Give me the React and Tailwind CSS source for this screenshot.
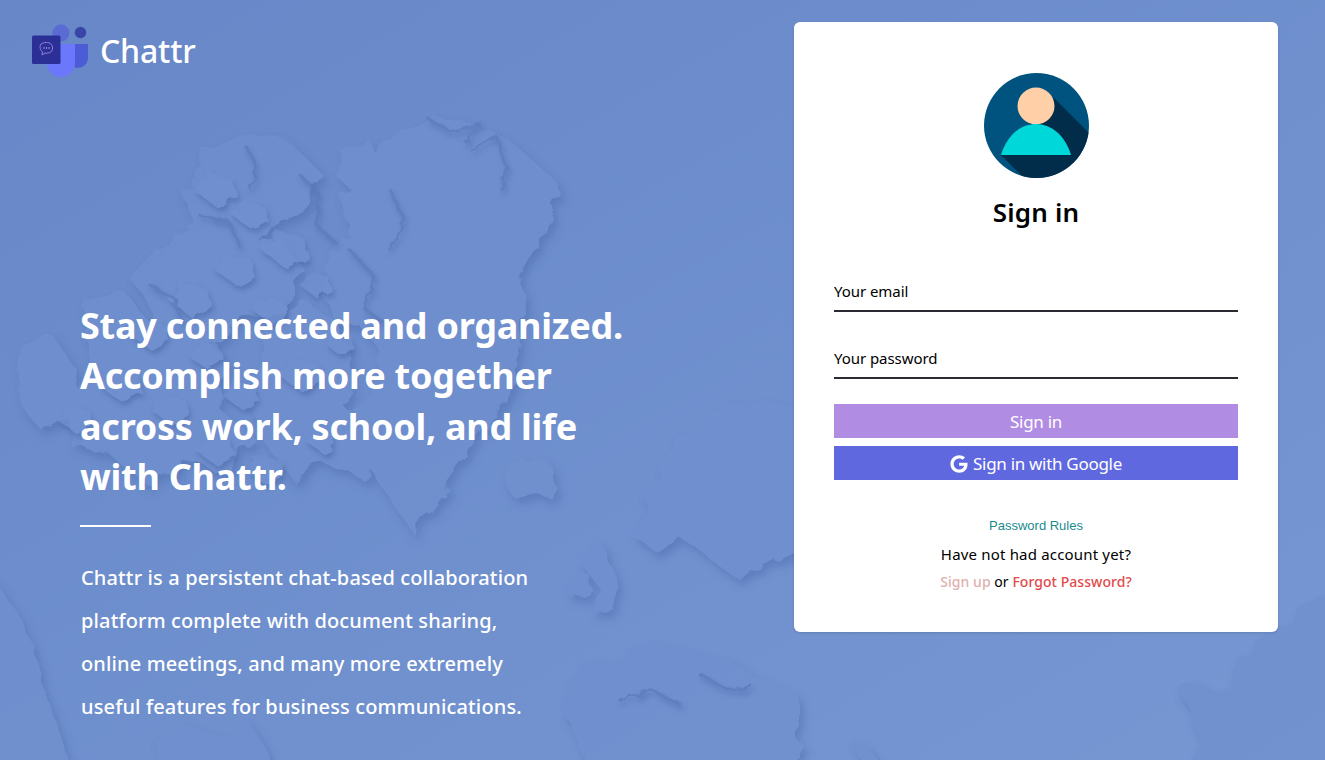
import React from 'react';
import { FaGoogle } from 'react-icons/fa';

// small arctic islands and fjords, these give the map its rough texture
const ISLANDS = [
  [215, 190, 22], [250, 215, 18], [285, 250, 24], [235, 270, 20], [190, 300, 22], [270, 310, 18],
  [315, 285, 16], [150, 335, 20], [205, 355, 18], [120, 385, 22], [170, 410, 20], [240, 395, 18],
  [300, 375, 22], [75, 420, 18], [215, 450, 20], [320, 440, 16], [265, 470, 20], [340, 345, 14],
];
const FJORDS = [
  'M430 120l20 12 28-8-14 16',
  'M472 150l24-14 10 30-4 24',
  'M245 145l14 24-10 18',
  'M300 175l20 20-4 30 18 16',
  'M200 215l30 8 10 24',
  'M350 250l24 26-8 34 20 14',
  'M390 190l14 30-14 30',
  'M150 285l26 14 4 22',
  'M620 700l30-10 30 14',
  'M700 675l30 16 20-6',
];

// Faint relief map behind the page
const WorldMap = () => (
  <svg className="absolute inset-0 w-full h-full" viewBox="0 0 1325 760" aria-hidden="true">
    <defs>
      <filter id="relief" x="-10%" y="-10%" width="120%" height="120%">
        <feTurbulence type="fractalNoise" baseFrequency="0.035" numOctaves="3" seed="7" result="noise" />
        <feDisplacementMap in="SourceGraphic" in2="noise" scale="20" result="coast" />
        <feGaussianBlur in="coast" stdDeviation="0.6" result="soft" />
        <feDropShadow in="soft" dx="4" dy="6" stdDeviation="4" floodColor="#4a68a8" floodOpacity="0.6" />
      </filter>
      <filter id="fine" x="-10%" y="-10%" width="120%" height="120%">
        <feTurbulence type="fractalNoise" baseFrequency="0.08" numOctaves="2" seed="3" result="noise" />
        <feDisplacementMap in="SourceGraphic" in2="noise" scale="10" result="coast" />
        <feDropShadow in="coast" dx="2" dy="4" stdDeviation="2.5" floodColor="#46639f" floodOpacity="0.7" />
      </filter>
    </defs>
    <g filter="url(#relief)" fill="#6f8fce" opacity="0.75">
      {/* arctic islands */}
      <path d="M205 150l40-18 45 10 30 30-15 40-40 12-18 32-42-16-20-44z" />
      <path d="M150 245l50-18 44 16 30-10 30 36-18 44-46 8-30 26-50-18-24-44z" />
      <path d="M85 300l40-8 30 38 40-4 34 38-10 44 34 28-22 36-50-12-32 26-40-32-36-6-8-50 24-24z" />
      <path d="M20 345l34-8 24 34-6 44-30 16-26-30z" />
      <path d="M270 330l34-28 30 16 20 44-10 44 30 36-8 40-44-20-28 20-34-44-6-60z" />
      <path d="M340 150l30-10 10 30-24 24-20-18z" />
      {/* greenland */}
      <path d="M385 140l50-24 70 20 54 48-20 60-20 38 5 64-18 50-43 66-50 72-40-59-20-40-20-10 40-30 10-40-20-26-30-8-14-44 30-40-10-40z" />
      <path d="M515 462c14-8 30-6 36 4 6 12 2 24-10 30-14 6-30 4-34-8-4-10 0-20 8-26z" />
      {/* scandinavia */}
      <path d="M680 440l50-34 70-6v150l-60 30-65-46-20 17-20-12 10-39z" />
      {/* britain */}
      <path d="M588 545l16-2 10 28 12 24-14 14-22 2 8-24-14-20z" />
      <path d="M570 574l18-2-2 20-16 6z" />
      {/* europe */}
      <path d="M574 667l50-12 50-12 56 20 70 34v70H590l-26-50z" />
      {/* america, bottom edge */}
      <path d="M-10 575l30 40 30 90 24 65h-84z" />
      <path d="M150 735l36-8 36 10 30-12 24 45H160z" />
      {/* right side */}
      <path d="M848 738l20 8 18 24h-20z" />
      <path d="M780 704l10-4 2 36 10 34h-22z" />
      <path d="M1300 600l-23 35-35 25-14 30-31-6-19 5 12 22 10 28-20 40h155V600z" />
    </g>
    <g filter="url(#fine)" opacity="0.7">
      {ISLANDS.map(([x, y, r]) => (
        <path
          key={`${x}-${y}`}
          d={`M${x - r} ${y}l${r * 0.7} ${-r * 0.8} ${r * 1.1} ${r * 0.3} ${r * 0.2} ${r * 0.8} ${-r * 0.9} ${r * 0.5}z`}
          fill="#7090cf"
        />
      ))}
      {FJORDS.map((d) => (
        <path key={d} d={d} fill="none" stroke="#5a79bb" strokeWidth="3" strokeLinecap="round" />
      ))}
    </g>
  </svg>
);

const Logo = () => (
  <svg width="57" height="56" viewBox="0 0 57 56">
    <circle cx="48.500" cy="10.500" r="5.700" fill="#3a45a8" />
    <path d="M42 22h14v14a10 10 0 0 1-14 9z" fill="#4c5cd6" />
    <circle cx="29" cy="11" r="8.500" fill="#5a6cd4" />
    <path d="M15 22h28v19a14 14 0 0 1-28 0z" fill="#6b78fb" />
    <rect x="0" y="13.500" width="28.500" height="28.500" rx="1.500" fill="#2b3097" />
    <path d="M9 22c3-2 8-2 10 0 2 2 2 6 0 8-2 1-4 1.500-6 1l-3 2 .5-3c-2-2-3.500-5-1.500-8z" fill="none" stroke="#9b7be0" strokeWidth="1" />
    <circle cx="12" cy="26" r=".7" fill="#c9b8f2" />
    <circle cx="14.500" cy="26" r=".7" fill="#c9b8f2" />
    <circle cx="17" cy="26" r=".7" fill="#c9b8f2" />
  </svg>
);

const Avatar = () => (
  <svg width="105" height="105" viewBox="0 0 105 105">
    <defs>
      <clipPath id="disc"><circle cx="52.500" cy="52.500" r="52.500" /></clipPath>
    </defs>
    <circle cx="52.500" cy="52.500" r="52.500" fill="#00527f" />
    <path d="M70 25L112 67V110H45L17 82z" fill="#012d4a" clipPath="url(#disc)" />
    <circle cx="52" cy="33" r="18.500" fill="#ffd0a8" />
    <path d="M17 82C23 62 37 51 52 51C67 51 81 62 87 82z" fill="#00d7d9" />
  </svg>
);

export default function App() {
  const sans = { fontFamily: '"Noto Sans", "Open Sans", sans-serif' };
  return (
    <div className="relative flex h-screen overflow-hidden bg-gradient-to-br from-[#6787c8] to-[#7697d2]" style={sans}>
      <WorldMap />

      <div className="relative flex-1 flex flex-col text-white">
        <div className="flex items-center gap-[11px] pl-[32px] pt-[20px]">
          <Logo />
          <span className="text-[32px] font-medium leading-[56px] mt-[3px] tracking-[-0.2px]">Chattr</span>
        </div>
        <div className="pl-[80px] pt-[222px]">
          <h1 className="text-[36px] font-bold leading-[50.4px] tracking-[-0.25px]">
            Stay connected and organized.<br />
            Accomplish more together<br />
            across work, school, and life<br />
            with Chattr.
          </h1>
          <div className="w-[71px] h-[2px] bg-white mt-[22px] mb-[29px]" />
          <p className="text-[20px] font-medium leading-[43px] tracking-[0.13px] pl-px">
            Chattr is a persistent chat-based collaboration<br />
            platform complete with document sharing,<br />
            online meetings, and many more extremely<br />
            useful features for business communications.
          </p>
        </div>
      </div>

      <div className="relative w-[484px] h-[610px] mt-[22px] mr-[47px] bg-white rounded-md shadow-sm px-10 pt-[51px]">
        <div className="flex flex-col items-center">
          <Avatar />
          <h2 className="text-[26px] font-semibold leading-[36px] mt-[16px] text-black tracking-[0.17px]">Sign in</h2>
        </div>
        <input
          placeholder="Your email"
          className="block w-full h-[40px] mt-[42px] border-b-2 border-[#2a2a33] text-[15px] tracking-[-0.05px] text-black placeholder:text-black outline-none"
        />
        <input
          placeholder="Your password"
          className="block w-full h-[40px] mt-[27px] border-b-2 border-[#2a2a33] text-[15px] tracking-[-0.05px] text-black placeholder:text-black outline-none"
        />
        <button className="block w-full h-[34px] mt-[25px] pt-px bg-[#b18ce3] text-white text-[17px] tracking-[-0.3px]">Sign in</button>
        <button className="flex items-center justify-center gap-[5px] w-full h-[34px] mt-[8px] pt-px bg-[#6068df] text-white text-[17px] tracking-[-0.3px]">
          <FaGoogle size={18} />
          Sign in with Google
        </button>
        <div className="flex flex-col items-center mt-[37px]">
          <a className="text-[13px] leading-[18px] text-[#1b8a8f]" style={{ fontFamily: '"Liberation Sans", sans-serif' }}>Password Rules</a>
          <p className="text-[15px] leading-[20px] mt-[9px] text-black tracking-[0.18px]">Have not had account yet?</p>
          <p className="text-[14px] leading-[20px] mt-[8px] text-black tracking-[0.05px]">
            <a className="text-[#dfb0ad] font-medium">Sign up</a> or <a className="text-[#e04b4b] font-medium">Forgot Password?</a>
          </p>
        </div>
      </div>
    </div>
  );
}
